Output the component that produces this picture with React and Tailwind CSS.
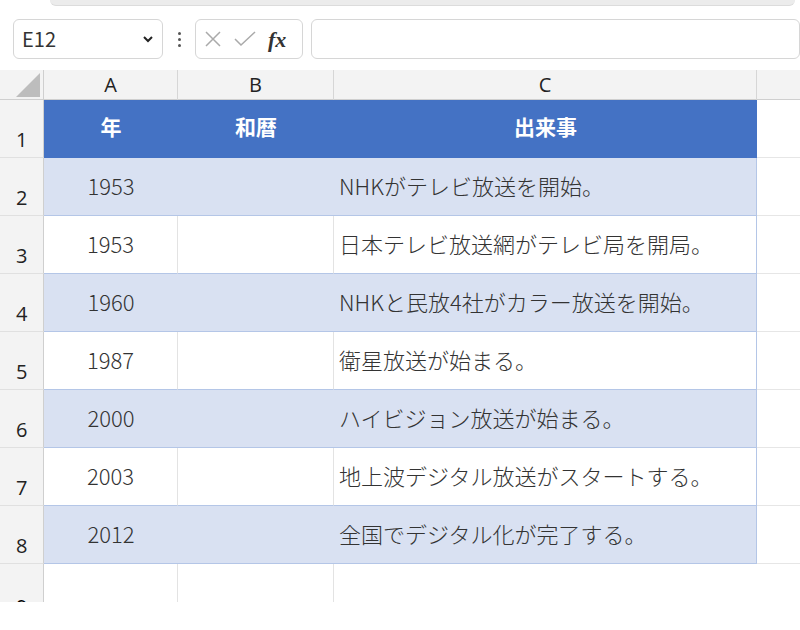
export default function App() {
  const rows = [
    ["1953", "NHKがテレビ放送を開始。"],
    ["1953", "日本テレビ放送網がテレビ局を開局。"],
    ["1960", "NHKと民放4社がカラー放送を開始。"],
    ["1987", "衛星放送が始まる。"],
    ["2000", "ハイビジョン放送が始まる。"],
    ["2003", "地上波デジタル放送がスタートする。"],
    ["2012", "全国でデジタル化が完了する。"],
  ];
  const font = { fontFamily: '"Noto Sans CJK JP", "Noto Sans", sans-serif' };
  return (
    <div className="w-[800px] h-[630px] bg-white overflow-hidden relative" style={font}>
      <div className="h-[6px] ml-[50px] mr-[5px] bg-[#ececec] rounded-b-lg border-b border-[#dcdcdc]" />
      <div className="flex items-center h-[42px] mt-[12px] px-[13px] gap-[8px]">
        <div className="w-[150px] h-[40px] border border-[#d6d6d6] rounded-md flex items-center justify-between px-[8px] text-[20px] text-[#333]">
          <span>E12</span>
          <svg width="12" height="12" viewBox="0 0 12 12"><path d="M2 4l4 4 4-4" stroke="#222" strokeWidth="2" fill="none" /></svg>
        </div>
        <div className="flex flex-col gap-[3px] w-[16px] items-center">
          <span className="w-[3px] h-[3px] bg-[#555] rounded-full" />
          <span className="w-[3px] h-[3px] bg-[#555] rounded-full" />
          <span className="w-[3px] h-[3px] bg-[#555] rounded-full" />
        </div>
        <div className="w-[108px] h-[40px] border border-[#d6d6d6] rounded-md flex items-center px-[8px] gap-[12px]">
          <svg width="18" height="18" viewBox="0 0 18 18"><path d="M2 2l14 14M16 2L2 16" stroke="#aaa" strokeWidth="1.5" /></svg>
          <svg width="22" height="18" viewBox="0 0 22 18"><path d="M1 9l6 6L21 2" stroke="#aaa" strokeWidth="1.5" fill="none" /></svg>
          <span className="text-[22px] italic font-bold text-[#333]" style={{ fontFamily: '"Liberation Serif", serif' }}>fx</span>
        </div>
        <div className="flex-1 h-[40px] border border-[#d6d6d6] rounded-md mr-[-13px]" />
      </div>
      <div className="mt-[10px] h-[532px] overflow-hidden">
        <div className="grid grid-cols-[44px_134px_156px_423px_1fr] h-[30px] bg-[#f3f3f3] border-b border-[#cfcfcf] text-[20px] text-[#222]" style={{ fontFamily: '"Open Sans", sans-serif' }}>
          <div className="relative border-r border-[#cfcfcf]">
            <svg className="absolute right-[3px] bottom-[3px]" width="24" height="24" viewBox="0 0 24 24"><path d="M24 0V24H0Z" fill="#bdbdbd" /></svg>
          </div>
          <div className="flex items-center justify-center border-r border-[#d6d6d6]">A</div>
          <div className="flex items-center justify-center border-r border-[#d6d6d6]">B</div>
          <div className="flex items-center justify-center border-r border-[#d6d6d6]">C</div>
          <div />
        </div>
        <div className="grid grid-cols-[44px_134px_156px_423px_1fr] h-[58px] text-[21px]">
          <div className="bg-[#f3f3f3] border-r border-[#cfcfcf] border-b border-b-[#e0e0e0] flex items-end pl-[16px] pb-[2px] text-[20px] text-[#222]" style={{ fontFamily: '"Open Sans", sans-serif' }}>1</div>
          <div className="bg-[#4472c4] text-white font-bold flex items-center justify-center pb-[4px]">年</div>
          <div className="bg-[#4472c4] text-white font-bold flex items-center justify-center pb-[4px]">和暦</div>
          <div className="bg-[#4472c4] text-white font-bold flex items-center justify-center pb-[4px]">出来事</div>
          <div className="border-b border-[#e6e6e6]" />
        </div>
        {rows.map((r, i) => {
          const band = i % 2 === 0;
          const bg = band ? "bg-[#d9e1f2]" : "bg-white";
          return (
            <div key={i} className="grid grid-cols-[44px_134px_156px_423px_1fr] h-[58px] text-[22px] text-[#333] font-light">
              <div className="bg-[#f3f3f3] border-r border-[#cfcfcf] border-b border-b-[#e0e0e0] flex items-end pl-[16px] pb-[2px] text-[20px] text-[#222] font-normal" style={{ fontFamily: '"Open Sans", sans-serif' }}>{i + 2}</div>
              <div className={`${bg} border-b border-[#b4c6e7] flex items-center justify-center pb-[2px] ${band ? "" : "border-r border-r-[#e3e3e3]"}`}>{r[0]}</div>
              <div className={`${bg} border-b border-[#b4c6e7] ${band ? "" : "border-r border-r-[#e3e3e3]"}`} />
              <div className={`${bg} border-b border-r border-[#b4c6e7] flex items-center pl-[5px] pb-[2px] whitespace-nowrap overflow-hidden`}>{r[1]}</div>
              <div className="border-b border-[#e6e6e6]" />
            </div>
          );
        })}
        <div className="grid grid-cols-[44px_134px_156px_423px_1fr] h-[58px]">
          <div className="bg-[#f3f3f3] border-r border-[#cfcfcf] flex items-end pl-[16px] text-[20px]" style={{ fontFamily: '"Open Sans", sans-serif' }}>9</div>
          <div className="border-r border-[#e3e3e3]" />
          <div className="border-r border-[#e3e3e3]" />
          <div />
          <div />
        </div>
      </div>
    </div>
  );
}
